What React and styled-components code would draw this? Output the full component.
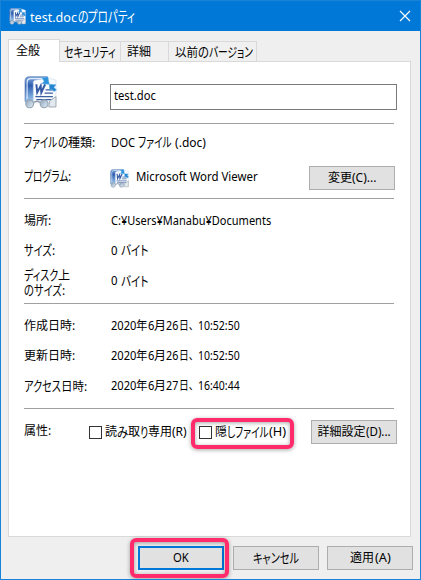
import React, { useLayoutEffect, useRef, useState } from "react";
import styled, { createGlobalStyle, css } from "styled-components";

const GlobalStyle = createGlobalStyle`
  *, *::before, *::after { box-sizing: border-box; }
  body { margin: 0; background: #efefef; }
`;

const Window = styled.div`
  display: flex;
  flex-direction: column;
  width: 421px;
  height: 580px;
  border: 1px solid #1883d7;
  background: #efefef;
  color: #000;
  font: 12px/16px "Noto Sans", "Noto Sans CJK JP", sans-serif;
  overflow: hidden;
`;

const TitleBar = styled.header`
  display: flex;
  align-items: center;
  flex: 0 0 30px;
  padding: 0 9px 0 8px;
  background: #0078d7;
  color: #fff;
  font-size: 13px;
`;

const TitleText = styled.h1`
  flex: 1;
  margin: 0 0 0 4px;
  font: inherit;
  line-height: 18px;
`;

const CloseButton = styled.button`
  display: flex;
  padding: 0;
  border: 0;
  background: none;
  color: #fff;
`;

const TabBar = styled.nav`
  display: flex;
  align-items: flex-end;
  height: 30px;
  padding-left: 7px;
`;

const Tab = styled.button`
  flex: none;
  width: ${(p) => p.$width}px;
  height: 20px;
  padding: ${(p) => p.$pad || "1px 0 0 7px"};
  border: 1px solid #d9d9d9;
  border-width: 1px 1px 0 0;
  background: #f0f0f0;
  font: inherit;
  color: inherit;
  text-align: left;
  ${(p) =>
    p.$active &&
    css`
      height: 23px;
      margin-bottom: -1px;
      padding: 0 0 1px 7px;
      border-left-width: 1px;
      background: #fff;
      z-index: 1;
    `}
`;

const Panel = styled.main`
  height: 476px;
  width: 403px;
  margin-left: 7px;
  padding: 0 13px 0 15px;
  border: 1px solid #d9d9d9;
  background: #fff;
`;

const Row = styled.div`
  display: flex;
  align-items: center;
  height: ${(p) => p.$h || 30}px;
  padding-top: ${(p) => p.$top || 0}px;
  padding-bottom: ${(p) => p.$bottom || 0}px;
`;

const Label = styled.div`
  flex: 0 0 ${(p) => p.$w || 87}px;
  padding-bottom: ${(p) => p.$lift || 0}px;
`;

const StackedLabel = styled(Label)`
  display: flex;
  flex-direction: column;
  padding-top: 4px;
`;

const LabelLine = styled.div`
  display: flex;
  height: 15px;
  line-height: 15px;
`;

const FileIcon = styled(Label)`
  display: flex;
  padding-bottom: 10px;
`;

const Rule = styled.hr`
  width: 370px;
  height: 1px;
  margin: 0;
  border: 0;
  background: #a0a0a0;
`;

const NameField = styled.div`
  width: 287px;
  height: 26px;
  padding: 3px 0 0 3px;
  border: 1px solid #7a7a7a;
  background: #fff;
`;

const ProgramName = styled.div`
  flex: 0 0 173px;
  margin-left: 7px;
  padding-bottom: 2px;
`;

const PushButton = styled.button`
  flex: none;
  width: 86px;
  height: 24px;
  padding: 0;
  border: 1px solid #adadad;
  background: #e1e1e1;
  color: inherit;
  font: inherit;
  text-align: center;
  ${(p) =>
    p.$primary &&
    css`
      border: 2px solid #0078d7;
    `}
`;

const CheckItem = styled.label`
  position: relative;
  display: flex;
  align-items: center;
  flex: 0 0 ${(p) => p.$w}px;
  height: 24px;
`;

const CheckBox = styled.span`
  width: 13px;
  height: 13px;
  margin: 1px 3px 0 0;
  border: 1px solid #333;
  background: #fff;
`;

const OkSlot = styled.div`
  position: relative;
  display: flex;
  margin-right: 1px;
`;

const HighlightRing = styled.span`
  position: absolute;
  inset: ${(p) => p.$inset};
  border: 4px solid #ff2b6b;
  border-radius: 6px;
  box-shadow: 0 1px 4px rgba(0, 0, 0, 0.35), inset 0 1px 4px rgba(0, 0, 0, 0.35);
  pointer-events: none;
`;

const Footer = styled.footer`
  display: flex;
  justify-content: flex-end;
  padding: 9px 7px 0 0;
  gap: 8px;
`;

const RunBox = styled.span`
  display: inline-block;
  white-space: pre;
`;

const RunInk = styled.span`
  display: inline-block;
  transform-origin: 0 50%;
  ${(p) =>
    p.$kana &&
    css`
      font-size: 1.12em;
      font-feature-settings: "palt";
    `}
`;

const KANA = /^[\u3040-\u30ff]+$/;

/* Sets a run of text to an exact advance width, condensing wide kana. */
function Run({ w, children }) {
  const ink = useRef(null);
  const [scale, setScale] = useState(1);
  useLayoutEffect(() => {
    setScale(w / ink.current.offsetWidth);
  }, [w, children]);
  return (
    <RunBox style={{ width: w }}>
      <RunInk ref={ink} $kana={KANA.test(children)} style={{ transform: `scaleX(${scale})` }}>
        {children}
      </RunInk>
    </RunBox>
  );
}

function Text({ parts }) {
  return parts.map(([text, w], i) => (
    <Run key={i} w={w}>
      {text}
    </Run>
  ));
}

function WordIcon({ size, id }) {
  return (
    <svg width={size} height={size} viewBox="0 0 32 32" aria-hidden="true">
      <defs>
        <linearGradient id={`${id}b`} x1="0" y1="0" x2="0" y2="1">
          <stop offset="0" stopColor="#86aee2" />
          <stop offset=".35" stopColor="#2c5cae" />
          <stop offset="1" stopColor="#9cc9f0" />
        </linearGradient>
        <linearGradient id={`${id}l`} x1="0" y1="0" x2="1" y2="1">
          <stop offset="0" stopColor="#8ea3b8" />
          <stop offset="1" stopColor="#e4f1fc" />
        </linearGradient>
      </defs>
      <path d="M5 .7h17v4H10v20H1V5Q1 .7 5 .7Z" fill={`url(#${id}b)`} stroke="#5e7fb3" strokeWidth=".7" />
      <path d="M3 22V6Q3 3 6 2.500h15" fill="none" stroke="#e0ecfb" strokeWidth="1.1" />
      <path d="M9 6Q9 4.500 11 4l13-2 7 2v22H9Z" fill="#f8fbff" stroke="#c3d2e8" strokeWidth=".5" />
      <path d="M21 13.500h7M20 16.500h8M11 20h17M12 23h16" stroke="#3b5f9f" strokeWidth="1.2" />
      <path d="m12 8 .8 8 3.400-6.500.6 6.500L20.500 8" fill="none" stroke="#3459a5" strokeWidth="1.9" />
      <path d="m17 1 3 1 3-1.500 1.500 7.500-7-.5 2-2.500Z" fill="#2c93dc" stroke="#5fb0e8" strokeWidth=".5" />
      <path d="m24.500 8 6.500.5-2 2.500 2.500 2.500-2.500 1.500-2.500-2.500-1.500 2Z" fill="#2586cf" stroke="#5fb0e8" strokeWidth=".5" />
      <path d="m25 24 6-4v10h-7Z" fill="#e3e9ee" stroke="#9aa5b0" strokeWidth=".9" />
      <path d="M9 26q3.500-3 7 0" fill="none" stroke="#8e99a5" strokeWidth="1.4" />
      <circle cx="5.500" cy="27" r="3.800" fill={`url(#${id}l)`} stroke="#93a2b1" strokeWidth="1.100" />
      <circle cx="19.500" cy="27" r="3.800" fill={`url(#${id}l)`} stroke="#93a2b1" strokeWidth="1.100" />
    </svg>
  );
}

const dateParts = (day, time) => [
  ["2020", 25], ["年", 11.5], ["6", 6.5], ["月", 12], [day, 12.5], ["日、", 19.5], [time, 42],
];

export default function App() {
  return (
    <>
      <GlobalStyle />
      <Window>
        <TitleBar>
          <WordIcon size={17} id="title" />
          <TitleText>
            <Text parts={[["test.doc", 47.5], ["の", 10.5], ["プロパティ", 47]]} />
          </TitleText>
          <CloseButton aria-label="閉じる">
            <svg width="12" height="12" viewBox="0 0 12 12">
              <path d="m1 1 10 10M11 1 1 11" stroke="currentColor" strokeWidth="1.2" />
            </svg>
          </CloseButton>
        </TitleBar>

        <TabBar>
          <Tab $active $width={52}><Text parts={[["全般", 24]]} /></Tab>
          <Tab $width={61} $pad="1px 0 0 4px"><Text parts={[["セキュリティ", 52]]} /></Tab>
          <Tab $width={48} $pad="1px 0 0 6px"><Text parts={[["詳細", 24]]} /></Tab>
          <Tab $width={88} $pad="1px 0 0 6px"><Text parts={[["以前", 23], ["の", 11], ["バージョン", 44]]} /></Tab>
        </TabBar>

        <Panel>
          <Row $h={61} $top={9} $bottom={0}>
            <FileIcon $w={86}><WordIcon size={33} id="large" /></FileIcon>
            <NameField><Text parts={[["test.doc", 42]]} /></NameField>
          </Row>
          <Rule />
          <Row $h={34} $top={3}>
            <Label><Text parts={[["ファイル", 33.5], ["の", 10.5], ["種類", 24], [":", 3]]} /></Label>
            <Text parts={[["DOC ", 27], ["ファイル", 34], [" (.doc)", 34]]} />
          </Row>
          <Row $h={40}>
            <Label $w={86} $lift={3}><Text parts={[["プログラム", 44], [":", 3]]} /></Label>
            <WordIcon size={19} id="small" />
            <ProgramName><Text parts={[["Microsoft Word Viewer", 122]]} /></ProgramName>
            <PushButton><Text parts={[["変更", 24], ["(C)...", 24]]} /></PushButton>
          </Row>
          <Rule />
          <Row $h={36} $top={7}>
            <Label><Text parts={[["場所", 24], [":", 3]]} /></Label>
            <Text parts={[["C:¥Users¥Manabu¥Documents", 160.5]]} />
          </Row>
          <Row $top={1}>
            <Label><Text parts={[["サイズ", 28], [":", 3]]} /></Label>
            <Text parts={[["0 ", 9.5], ["バイト", 27.5]]} />
          </Row>
          <Row $h={38} $bottom={6}>
            <StackedLabel>
              <LabelLine><Text parts={[["ディスク", 34], ["上", 12]]} /></LabelLine>
              <LabelLine><Text parts={[["の", 10], ["サイズ", 28], [":", 3]]} /></LabelLine>
            </StackedLabel>
            <Text parts={[["0 ", 9.5], ["バイト", 27.5]]} />
          </Row>
          <Rule />
          <Row $h={37} $top={7}>
            <Label><Text parts={[["作成日時", 48], [":", 3]]} /></Label>
            <Text parts={dateParts("26", "10:52:50")} />
          </Row>
          <Row>
            <Label><Text parts={[["更新日時", 48], [":", 3]]} /></Label>
            <Text parts={dateParts("26", "10:52:50")} />
          </Row>
          <Row $h={37} $bottom={7}>
            <Label><Text parts={[["アクセス", 37], ["日時", 23], [":", 3]]} /></Label>
            <Text parts={dateParts("27", "16:40:44")} />
          </Row>
          <Rule />
          <Row $h={46}>
            <Label $w={65} $lift={2}><Text parts={[["属性", 24], [":", 3]]} /></Label>
            <CheckItem $w={110}>
              <CheckBox />
              <Text parts={[["読", 12], ["み", 11], ["取", 12], ["り", 8], ["専用", 24], ["(R)", 15]]} />
            </CheckItem>
            <CheckItem $w={112}>
              <CheckBox />
              <Text parts={[["隠", 12], ["し", 8], ["ファイル", 34], ["(H)", 17]]} />
              <HighlightRing $inset="-2px 17px -5px -8px" />
            </CheckItem>
            <PushButton><Text parts={[["詳細設定", 48], ["(D)...", 25]]} /></PushButton>
          </Row>
        </Panel>

        <Footer>
          <OkSlot>
            <PushButton $primary><Text parts={[["OK", 16]]} /></PushButton>
            <HighlightRing $inset="-8px -5px -8px -8px" />
          </OkSlot>
          <PushButton><Text parts={[["キャンセル", 46]]} /></PushButton>
          <PushButton><Text parts={[["適用", 24], ["(A)", 16]]} /></PushButton>
        </Footer>
      </Window>
    </>
  );
}
